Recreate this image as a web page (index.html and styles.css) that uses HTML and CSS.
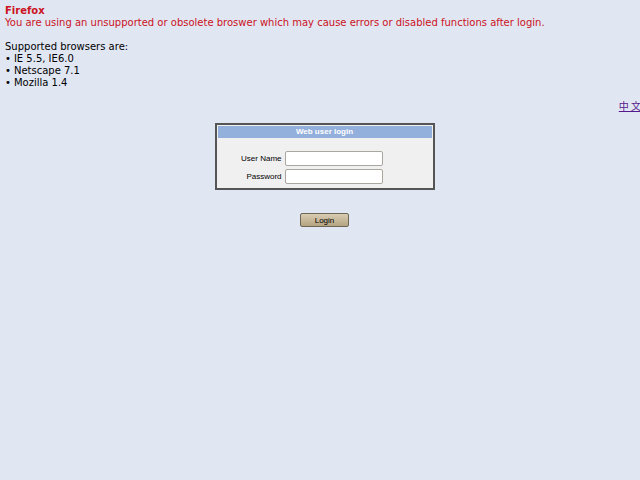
FILE: index.html
```html
<!DOCTYPE html>
<html>
<head>
<meta charset="utf-8">
<link rel="stylesheet" href="styles.css">
</head>
<body>
<div class="page">
  <div class="warn">
    <div class="browser">Firefox</div>
    <div>You are using an unsupported or obsolete broswer which may cause errors or disabled functions after login.</div>
  </div>
  <div class="supported">
    <div>Supported browsers are:</div>
    <ul class="list">
      <li>IE 5.5, IE6.0</li>
      <li>Netscape 7.1</li>
      <li>Mozilla 1.4</li>
    </ul>
  </div>
  <div class="lang"><a href="#" class="lang-link">中&nbsp;文</a></div>
  <div class="center">
    <div class="login-box">
      <div class="login-head">Web user login</div>
      <div class="login-body">
        <div class="row"><label class="lbl">User Name</label><input class="field" type="text"></div>
        <div class="row"><label class="lbl">Password</label><input class="field" type="password"></div>
      </div>
    </div>
    <button class="btn">Login</button>
  </div>
</div>
</body>
</html>
```
FILE: styles.css
```css
html, body { margin: 0; padding: 0; overflow: hidden; }
body {
  background: #e0e7f3;
  font-family: "DejaVu Sans", sans-serif;
  font-size: 10px;
  line-height: 12px;
  color: #000;
}
.page { width: 644px; padding: 5px 0 0 5px; box-sizing: border-box; }
.warn { color: #cc1122; }
.browser { font-weight: bold; }
.supported { margin-top: 12px; }
.list { margin: 0; padding: 0; list-style: none; }
.list li::before { content: "\2022"; margin-right: 3px; }
.lang { display: flex; justify-content: flex-end; margin-top: 11px; margin-right: 3px; }
.lang-link { color: #551a8b; font-family: "Noto Sans CJK SC", sans-serif; font-size: 10px; line-height: 12px; }
.center { display: flex; flex-direction: column; align-items: center; margin-top: 11px; }
.login-box {
  width: 216px;
  border: 2px solid #555;
  background: #f0f0f0;
  font-family: "Liberation Sans", Arial, sans-serif;
  font-size: 8px;
}
.login-head {
  background: #93afdc;
  color: #fff;
  font-weight: bold;
  text-align: center;
  height: 12px;
  line-height: 12px;
  margin: 1px;
}
.login-body { padding: 12px 0 4px 0; display: flex; flex-direction: column; gap: 3px; }
.row { display: flex; align-items: center; }
.lbl { width: 65px; text-align: right; padding-right: 3px; }
.field {
  width: 98px; height: 15px; box-sizing: border-box;
  border: 1px solid #aaa79f; border-radius: 2px; background: #fff; margin: 0; padding: 0;
}
.btn {
  margin-top: 23px;
  width: 49px; height: 14px;
  font-family: "Liberation Sans", Arial, sans-serif;
  font-size: 8px;
  padding: 0;
  border: 1px solid #6d6656;
  border-radius: 2px;
  background: linear-gradient(#d8ccb2, #b4a482);
  color: #000;
}
```
